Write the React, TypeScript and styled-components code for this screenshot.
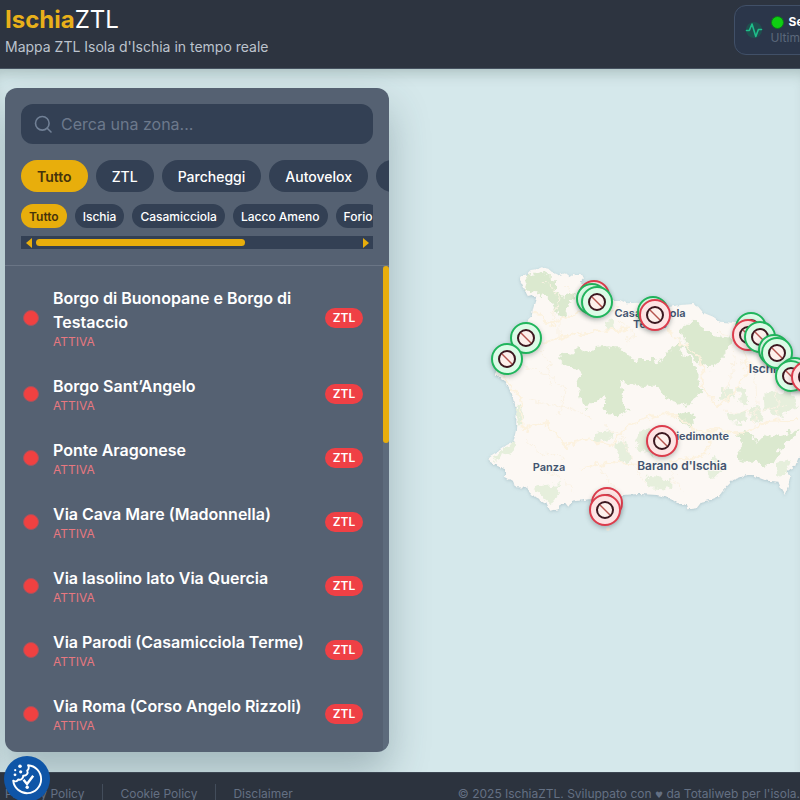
import React, { useState } from "react";
import styled, { createGlobalStyle } from "styled-components";

const GlobalStyle = createGlobalStyle`
  *, *::before, *::after { box-sizing: border-box; }
  body { margin: 0; background: #d5e8eb; font-family: Inter, sans-serif; }
  button, input { font-family: inherit; }
`;

const Shell = styled.div`
  display: flex;
  flex-direction: column;
  height: 100vh;
  overflow: hidden;
`;

const Header = styled.header`
  position: relative;
  z-index: 1;
  flex: none;
  display: flex;
  align-items: flex-start;
  gap: 465px;
  height: 69px;
  padding: 5px;
  overflow: hidden;
  background: #2d3440;
  white-space: nowrap;
  border-bottom: 1px solid #465260;
`;

const Brand = styled.div`
  flex: none;
`;

const Title = styled.h1`
  margin: 0;
  font-size: 24px;
  line-height: 30px;
  font-weight: 400;
  color: #ffffff;
`;

const Accent = styled.span`
  font-weight: 700;
  color: #e8b01a;
`;

const Tagline = styled.p`
  margin: 0;
  font-size: 14px;
  line-height: 24px;
  color: #bcc3cd;
`;

const StatusCard = styled.div`
  flex: none;
  display: flex;
  align-items: center;
  gap: 8px;
  height: 50px;
  padding: 0 10px;
  border: 1px solid #415068;
  border-radius: 12px;
  background: #2b364a;
`;

const StatusLine = styled.div`
  display: flex;
  align-items: center;
  gap: 5px;
  font-size: 12px;
  line-height: 16px;
  font-weight: 700;
  color: #ffffff;
`;

const StatusLed = styled.span`
  width: 13px;
  height: 13px;
  border-radius: 50%;
  border: 1px solid #0b7a1b;
  background: #0fce12;
`;

const StatusNote = styled.div`
  font-size: 12px;
  line-height: 16px;
  color: #5b687b;
`;

const Main = styled.main`
  position: relative;
  flex: 0 0 calc(100vh - 97px);
  display: flex;
  padding: 19px 5px 20px;
  background: #d5e8eb;
  box-shadow: inset 0 12px 14px -8px rgba(80, 105, 100, 0.32);
  overflow: hidden;
`;

const MapCanvas = styled.div`
  position: absolute;
  inset: 0 0 auto 0;
  aspect-ratio: 800 / 703;
`;

const MapDrawing = styled.svg`
  display: block;
  width: 100%;
  height: 100%;
`;

const Pin = styled.button<{ $active: boolean }>`
  position: absolute;
  display: grid;
  place-items: center;
  width: 32px;
  height: 32px;
  padding: 0;
  transform: translate(-50%, -50%);
  border: 2px solid ${(p) => (p.$active ? "#dc3c4c" : "#20b55c")};
  border-radius: 50%;
  background: ${(p) => (p.$active ? "#fde4e4" : "#dcfbe7")};
  box-shadow: 0 2px 5px rgba(40, 60, 60, 0.3);
  cursor: pointer;
`;

const Panel = styled.aside`
  position: relative;
  display: flex;
  flex-direction: column;
  width: 384px;
  max-width: 100%;
  border-radius: 12px;
  background: #556172;
  box-shadow: 0 20px 40px rgba(50, 75, 85, 0.32);
  overflow: hidden;
`;

const Controls = styled.div`
  display: flex;
  flex-direction: column;
  padding: 16px;
  border-bottom: 1px solid #6a7585;
`;

const SearchField = styled.label`
  display: flex;
  align-items: center;
  gap: 8px;
  height: 40px;
  padding: 0 13px;
  border-radius: 12px;
  background: #334054;
  color: #718096;
`;

const SearchInput = styled.input`
  flex: 1;
  min-width: 0;
  padding: 0;
  border: 0;
  outline: 0;
  background: transparent;
  font-size: 16px;
  line-height: 24px;
  color: #ffffff;
  &::placeholder { color: #6c798c; opacity: 1; }
`;

const ChipRow = styled.div<{ $small?: boolean }>`
  display: flex;
  gap: 8px;
  margin: ${(p) => (p.$small ? "12px 0 8px" : "16px -16px 0 0")};
  overflow: hidden;
`;

const Chip = styled.button<{ $small?: boolean; $selected: boolean }>`
  flex: none;
  height: ${(p) => (p.$small ? 24 : 32)}px;
  padding: 0 ${(p) => (p.$small ? 8 : 16)}px;
  border: 0;
  border-radius: 16px;
  background: ${(p) => (p.$selected ? "#e8ae0c" : "#334054")};
  color: ${(p) => (p.$selected ? "#45330b" : "#ffffff")};
  font-size: ${(p) => (p.$small ? 12 : 14)}px;
  font-weight: ${(p) => (p.$selected ? 600 : 500)};
  white-space: nowrap;
  cursor: pointer;
`;

const HorizontalTrack = styled.div`
  display: grid;
  grid-template-columns: 15px 1fr 15px;
  align-items: center;
  height: 13px;
  background: #334054;
`;

const Arrow = styled.span<{ $right?: boolean }>`
  justify-self: center;
  border-top: 5px solid transparent;
  border-bottom: 5px solid transparent;
  ${(p) => (p.$right ? "border-left" : "border-right")}: 6px solid #e8ae0c;
`;

const HorizontalThumb = styled.div`
  width: 65%;
  height: 7px;
  border-radius: 4px;
  background: #e8ae0c;
`;

const ListArea = styled.div`
  flex: 1;
  display: grid;
  grid-template-columns: 1fr 6px;
  min-height: 0;
  overflow: hidden;
`;

const ZoneList = styled.ul`
  margin: 0;
  padding: 8px 20px 8px 18px;
  list-style: none;
`;

const ZoneRow = styled.li`
  display: flex;
  align-items: center;
  gap: 14px;
  padding: 12px 0;
`;

const Dot = styled.span`
  flex: none;
  width: 16px;
  height: 16px;
  border: 1px solid #a35460;
  border-radius: 50%;
  background: #f04141;
`;

const ZoneText = styled.div`
  flex: 1;
  min-width: 0;
`;

const ZoneName = styled.div`
  font-size: 16px;
  line-height: 24px;
  font-weight: 600;
  color: #ffffff;
`;

const ZoneState = styled.div`
  font-size: 12px;
  line-height: 16px;
  color: #e87880;
`;

const Badge = styled.span`
  flex: none;
  width: 38px;
  border-radius: 10px;
  background: #ef4045;
  color: #ffffff;
  font-size: 12px;
  line-height: 20px;
  font-weight: 600;
  text-align: center;
`;

const VerticalTrack = styled.div`
  background: #5d6b7c;
`;

const VerticalThumb = styled.div`
  height: 177px;
  border-radius: 3px;
  background: #e8ae0c;
`;

const Footer = styled.footer`
  flex: none;
  display: flex;
  justify-content: space-between;
  height: 44px;
  padding: 11px 0 11px 5px;
  background: #2c333e;
  border-top: 1px solid #3c4652;
  color: #647083;
  font-size: 12px;
  line-height: 20px;
  white-space: nowrap;
`;

const FooterLinks = styled.nav`
  display: flex;
  gap: 18px;
`;

const FooterLink = styled.a`
  color: inherit;
  text-decoration: none;
  & + & {
    padding-left: 17px;
    border-left: 1px solid #434d5b;
  }
`;

const Heart = styled.span`
  font-family: "DejaVu Sans", sans-serif;
  font-size: 9px;
`;

const CookieButton = styled.button`
  position: fixed;
  z-index: 2;
  left: 4px;
  bottom: -2px;
  display: grid;
  place-items: center;
  width: 46px;
  height: 46px;
  padding: 0;
  border: 0;
  border-radius: 50%;
  background: #0f55a7;
  cursor: pointer;
`;

const pins = [
  { x: 594, y: 296, active: true },
  { x: 592, y: 299, active: false },
  { x: 597, y: 302, active: false },
  { x: 526, y: 338, active: false },
  { x: 507, y: 359, active: false },
  { x: 653, y: 312, active: false },
  { x: 655, y: 315, active: true },
  { x: 751, y: 328, active: false },
  { x: 748, y: 335, active: true },
  { x: 760, y: 337, active: false },
  { x: 774, y: 350, active: false },
  { x: 777, y: 353, active: false },
  { x: 795, y: 373, active: false },
  { x: 791, y: 376, active: false },
  { x: 807, y: 377, active: true },
  { x: 662, y: 441, active: true },
  { x: 607, y: 503, active: true },
  { x: 605, y: 510, active: true },
];

const places = [
  { name: "Casamicciola", x: 650, y: 317, size: 11 },
  { name: "Terme", x: 650, y: 328, size: 11 },
  { name: "Ischia", x: 766, y: 373, size: 12 },
  { name: "Piedimonte", x: 699, y: 440, size: 11 },
  { name: "Barano d'Ischia", x: 682, y: 470, size: 12 },
  { name: "Panza", x: 549, y: 471, size: 11 },
];

const COAST =
  "M120 60 L128 48 L140 42 L152 30 L175 26 L185 22 L205 26 L218 38 L235 46 L255 40 L270 52 L285 42 L305 42 L312 55 L300 68 L320 80 L360 110 L400 120 L420 120 L440 130 L470 128 L500 130 L570 140 L600 135 L640 132 L655 140 L670 158 L700 170 L720 185 L760 188 L800 190 L870 230 L970 330 V590 L955 595 L945 620 L935 625 L920 635 L930 650 L925 680 L915 705 L905 690 L895 665 L860 662 L840 655 L820 645 L800 645 L760 660 L740 680 L715 710 L690 720 L665 725 L650 745 L625 748 L620 735 L590 728 L570 715 L530 705 L480 702 L430 705 L330 718 L275 725 L265 740 L255 728 L240 735 L235 748 L210 752 L200 730 L165 712 L145 690 L135 683 L105 682 L100 665 L75 650 L75 628 L45 615 L22 600 L30 588 L60 570 L80 555 L100 545 L108 510 L110 450 L95 400 L75 365 L45 345 L60 290 L130 240 L145 215 L140 180 L155 165 L160 140 L168 115 L155 105 L145 108 L135 90 L128 75 Z";

const WOODS = [
  "M232 290 L250 278 L275 285 L300 262 L325 275 L345 262 L375 258 L400 262 L430 262 L440 285 L475 300 L520 300 L540 305 L560 280 L580 265 L600 240 L612 260 L600 280 L625 290 L650 320 L655 370 L665 400 L640 420 L625 440 L600 432 L575 425 L550 400 L520 380 L480 380 L440 372 L420 365 L430 390 L425 430 L445 455 L420 465 L405 475 L385 460 L368 440 L372 415 L345 420 L325 445 L305 430 L300 400 L290 370 L300 345 L280 320 L255 310 Z",
  "M602 205 L625 188 L655 190 L670 210 L700 225 L730 230 L760 235 L745 260 L730 290 L710 312 L690 325 L670 310 L650 305 L630 285 L615 265 L618 240 L605 225 Z",
  "M590 450 L640 465 L645 490 L625 510 L600 485 Z",
  "M130 70 L150 45 L185 35 L205 45 L225 65 L225 95 L250 110 L270 100 L285 95 L280 120 L265 130 L260 160 L245 180 L230 155 L215 130 L190 105 L170 95 L150 100 L135 85 Z",
  "M770 520 L800 510 L830 545 L860 530 L900 525 L935 515 L965 500 L930 545 L905 570 L880 600 L850 620 L820 605 L790 605 L765 590 L790 560 Z",
];

const SCRUB = [
  "M35 592 L70 568 L105 545 L112 555 L95 575 L50 600 Z",
  "M165 680 L200 675 L240 670 L235 710 L210 730 L175 700 Z",
  "M475 520 L510 500 L530 520 L525 590 L480 570 L465 540 Z",
  "M345 515 L400 510 L395 535 L345 545 Z",
  "M400 550 L445 545 L450 600 L430 610 Z",
  "M495 650 L580 655 L580 690 L505 685 Z",
  "M720 390 L755 380 L770 415 L720 420 Z",
  "M775 375 L800 400 L810 440 L775 430 Z",
  "M850 400 L930 395 L955 440 L900 470 L855 450 Z",
  "M740 460 L800 455 L790 490 L745 485 Z",
  "M820 440 L850 450 L840 490 L810 480 Z",
  "M680 640 L710 590 L735 615 L700 660 Z",
  "M370 190 L400 180 L405 205 L380 215 Z",
  "M110 440 L130 445 L132 480 L115 500 Z",
  "M890 610 L935 600 L920 640 L895 650 Z",
];

const MAIN_ROADS =
  "M535 310 L548 325 L580 312 L620 310 L650 320 L672 332 L680 343 L696 352 L702 365 L703 390 M702 390 L718 405 L733 395 L748 372 L743 350 L746 330 M500 370 L520 398 L523 430 L545 423 L565 445 L590 440 L612 445 L628 426 L655 415 L675 414 L693 431 L718 430 L742 434 L766 421 L795 420 M540 344 L570 336 L598 331 L630 329 M715 430 L705 455 L680 460 L650 466 L610 462 L580 469";

const SIDE_ROADS =
  "M520 365 L550 374 L564 390 L560 415 M530 400 L555 404 L590 416 M534 344 L550 362 L548 388 M525 440 L540 453 L565 459 M604 424 L625 440 L632 464 L645 482 M735 345 L733 370 L725 395 M755 365 L757 405 L752 430 M775 378 L778 415 M718 333 L738 338 M740 360 L765 372 M725 410 L752 413 L787 405 M670 470 L682 492 M620 320 L635 334 L625 342 M560 320 L560 340 M600 466 L615 488 M540 470 L557 476 L575 490 M545 280 L560 300 L552 320 M565 285 L578 300";

const zones = [
  "Borgo di Buonopane e Borgo di Testaccio",
  "Borgo Sant’Angelo",
  "Ponte Aragonese",
  "Via Cava Mare (Madonnella)",
  "Via Iasolino lato Via Quercia",
  "Via Parodi (Casamicciola Terme)",
  "Via Roma (Corso Angelo Rizzoli)",
];

const kinds = ["Tutto", "ZTL", "Parcheggi", "Autovelox", "Info"];
const towns = ["Tutto", "Ischia", "Casamicciola", "Lacco Ameno", "Forio"];

function BanIcon() {
  return (
    <svg width="20" height="20" viewBox="0 0 20 20" fill="none" aria-hidden="true">
      <circle cx="10" cy="10" r="8" fill="#fdf0ec" stroke="#3c1820" strokeWidth="2" />
      <path d="M5 5 L15 15" stroke="#b5544e" strokeWidth="1.4" />
    </svg>
  );
}

function PulseIcon() {
  return (
    <svg width="18" height="18" viewBox="0 0 18 18" fill="none" aria-hidden="true">
      <circle cx="9" cy="9" r="8" fill="#176052" opacity="0.6" />
      <path
        d="M1.5 9.5 H4.3 L7 3 L10.8 15.5 L13.4 8.5 H16.5"
        stroke="#1fbd8a"
        strokeWidth="1.6"
        strokeLinecap="round"
        strokeLinejoin="round"
      />
    </svg>
  );
}

function SearchIcon() {
  return (
    <svg width="19" height="19" viewBox="0 0 19 19" fill="none" aria-hidden="true">
      <circle cx="8.3" cy="8.3" r="6.8" stroke="currentColor" strokeWidth="1.6" />
      <path d="M13.2 13.2 L17 17" stroke="currentColor" strokeWidth="1.6" strokeLinecap="round" />
    </svg>
  );
}

function CookieIcon() {
  return (
    <svg width="32" height="32" viewBox="0 0 32 32" fill="none" aria-hidden="true">
      <path
        d="M17 2.2 A14 14 0 1 1 2.2 17.6 C4 19 6.3 18.5 7.2 16.5 C9.8 17.4 12.4 15.5 12.2 12.8 C15.5 13 17.6 10.3 16.2 7.6 C18 6.4 18.2 4 17 2.2 Z"
        stroke="#ffffff"
        strokeWidth="1.9"
        strokeLinejoin="round"
      />
      <path d="M12.5 16.7 L16 21 L22.2 12.7" stroke="#ffffff" strokeWidth="2.4" />
      <circle cx="16.2" cy="24.3" r="1.7" fill="#ffffff" />
      <circle cx="9" cy="3.2" r="1.8" fill="#ffffff" />
      <circle cx="4.2" cy="7.2" r="1.1" fill="#ffffff" />
      <circle cx="9.7" cy="8.8" r="1.6" fill="#ffffff" />
      <circle cx="4" cy="11.8" r="1.4" fill="#ffffff" />
    </svg>
  );
}

function IslandMap() {
  return (
    <MapCanvas>
      <MapDrawing viewBox="0 69 800 703" role="img" aria-label="Isola d'Ischia">
        <defs>
          <filter id="ragged" x="-5%" y="-5%" width="110%" height="110%" colorInterpolationFilters="sRGB">
            <feTurbulence type="fractalNoise" baseFrequency="0.13" numOctaves="4" seed="4" />
            <feDisplacementMap in="SourceGraphic" scale="11" xChannelSelector="R" yChannelSelector="G" />
          </filter>
          <filter id="coastline" x="-5%" y="-5%" width="110%" height="115%" colorInterpolationFilters="sRGB">
            <feTurbulence type="fractalNoise" baseFrequency="0.2" numOctaves="2" seed="9" />
            <feDisplacementMap in="SourceGraphic" scale="4" xChannelSelector="R" yChannelSelector="G" result="land" />
            <feDropShadow in="land" dx="0" dy="1" stdDeviation="1.5" floodColor="#91a9b3" floodOpacity="0.5" />
          </filter>
        </defs>
        <g filter="url(#coastline)">
          <path d={COAST} fill="#fcf8f4" transform="translate(480 260) scale(0.3333)" />
        </g>
        <circle cx="608" cy="529" r="2" fill="#eee9dd" />
        <g filter="url(#ragged)">
          <g transform="translate(480 260) scale(0.3333)">
            {SCRUB.map((d) => (
              <path key={d} d={d} fill="#e6efdc" />
            ))}
            {WOODS.map((d) => (
              <path key={d} d={d} fill="#dbe9cf" />
            ))}
          </g>
        </g>
        <g fill="none" strokeLinejoin="round" filter="url(#ragged)">
          <path d={SIDE_ROADS} stroke="#faf2e4" strokeWidth="1" />
          <path d={MAIN_ROADS} stroke="#fcf2df" strokeWidth="2" />
        </g>
        <g
          fill="#42536f"
          stroke="#fbf8f3"
          strokeWidth="2"
          paintOrder="stroke"
          textAnchor="middle"
          fontFamily="Inter, sans-serif"
          fontWeight="600"
        >
          {places.map((p) => (
            <text key={p.name} x={p.x} y={p.y} fontSize={p.size}>
              {p.name}
            </text>
          ))}
        </g>
      </MapDrawing>
      {pins.map((p) => (
        <Pin
          key={`${p.x}-${p.y}`}
          type="button"
          aria-label={p.active ? "ZTL attiva" : "ZTL non attiva"}
          $active={p.active}
          style={{ left: `${(p.x / 800) * 100}%`, top: `${((p.y - 69) / 703) * 100}%` }}
        >
          <BanIcon />
        </Pin>
      ))}
    </MapCanvas>
  );
}

export default function App() {
  const [kind, setKind] = useState("Tutto");
  const [town, setTown] = useState("Tutto");
  const [query, setQuery] = useState("");
  const shown = zones.filter((z) => z.toLowerCase().includes(query.toLowerCase()));

  return (
    <Shell>
      <GlobalStyle />
      <Header>
        <Brand>
          <Title>
            <Accent>Ischia</Accent>ZTL
          </Title>
          <Tagline>Mappa ZTL Isola d'Ischia in tempo reale</Tagline>
        </Brand>
        <StatusCard>
          <PulseIcon />
          <div>
            <StatusLine>
              <StatusLed />
              Servizio attivo
            </StatusLine>
            <StatusNote>Ultimo aggiornamento</StatusNote>
          </div>
        </StatusCard>
      </Header>
      <Main>
        <IslandMap />
        <Panel>
          <Controls>
            <SearchField>
              <SearchIcon />
              <SearchInput
                type="text"
                aria-label="Cerca una zona"
                placeholder="Cerca una zona..."
                value={query}
                onChange={(e) => setQuery(e.target.value)}
              />
            </SearchField>
            <ChipRow>
              {kinds.map((k) => (
                <Chip key={k} type="button" $selected={k === kind} onClick={() => setKind(k)}>
                  {k}
                </Chip>
              ))}
            </ChipRow>
            <ChipRow $small>
              {towns.map((t) => (
                <Chip key={t} type="button" $small $selected={t === town} onClick={() => setTown(t)}>
                  {t}
                </Chip>
              ))}
            </ChipRow>
            <HorizontalTrack>
              <Arrow />
              <HorizontalThumb />
              <Arrow $right />
            </HorizontalTrack>
          </Controls>
          <ListArea>
            <ZoneList>
              {shown.map((z) => (
                <ZoneRow key={z}>
                  <Dot />
                  <ZoneText>
                    <ZoneName>{z}</ZoneName>
                    <ZoneState>ATTIVA</ZoneState>
                  </ZoneText>
                  <Badge>ZTL</Badge>
                </ZoneRow>
              ))}
            </ZoneList>
            <VerticalTrack>
              <VerticalThumb />
            </VerticalTrack>
          </ListArea>
        </Panel>
      </Main>
      <Footer>
        <FooterLinks>
          <FooterLink href="#privacy">Privacy Policy</FooterLink>
          <FooterLink href="#cookie">Cookie Policy</FooterLink>
          <FooterLink href="#disclaimer">Disclaimer</FooterLink>
        </FooterLinks>
        <span>
          © 2025 IschiaZTL. Sviluppato con <Heart>♥</Heart> da Totaliweb per l'isola.
        </span>
      </Footer>
      <CookieButton type="button" aria-label="Preferenze cookie">
        <CookieIcon />
      </CookieButton>
    </Shell>
  );
}
